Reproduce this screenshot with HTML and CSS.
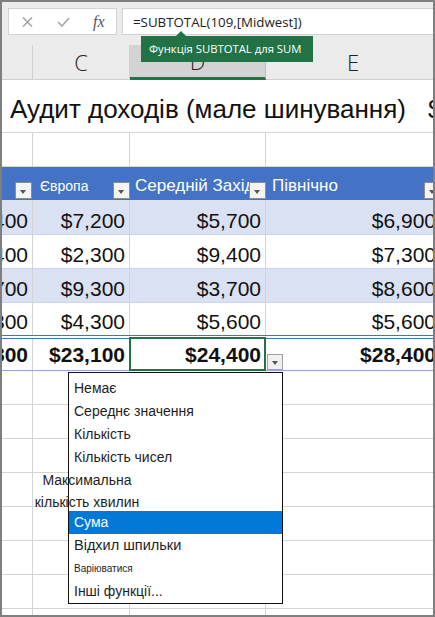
FILE: index.html
```html
<!DOCTYPE html>
<html lang="uk">
<head>
    <meta charset="UTF-8">
    <meta name="viewport" content="width=device-width, initial-scale=1.0">
    <title>Аудит доходів</title>
    <link rel="stylesheet" href="styles.css">
</head>
<body>
    <div class="window">
        <div class="formula-bar">
            <div class="fx-tools">
                <svg class="tool" width="11" height="10" viewBox="0 0 11 10">
                    <path d="M1 0.5 L10 9.5 M10 0.5 L1 9.5" />
                </svg>
                <svg class="tool" width="13" height="10" viewBox="0 0 13 10">
                    <path d="M1 5 L5 9 L12 1" />
                </svg>
                <i class="fx">fx</i>
            </div>
            <div class="formula">
                <span class="formula-text">=SUBTOTAL(109,[Midwest])</span>
                <div class="tip">Функція SUBTOTAL для SUM</div>
            </div>
        </div>

        <div class="col-heads">
            <div class="col-head"></div>
            <div class="col-head">C</div>
            <div class="col-head active">D</div>
            <div class="col-head">E</div>
        </div>

        <div class="sheet">
            <div class="title-row">
                <span class="title">Аудит доходів (мале шинування)</span>
                <span class="title next">$</span>
            </div>

            <div class="row">
                <div class="cell"></div><div class="cell"></div><div class="cell"></div><div class="cell"></div>
            </div>

            <div class="row thead">
                <div class="th"><span class="filter"></span></div>
                <div class="th small">Європа<span class="filter"></span></div>
                <div class="th">Середній Захід<span class="filter"></span></div>
                <div class="th">Північно<span class="filter"></span></div>
            </div>

            <div class="row data band first">
                <div class="cell">$6,400</div><div class="cell">$7,200</div><div class="cell">$5,700</div><div class="cell">$6,900</div>
            </div>
            <div class="row data">
                <div class="cell">$8,400</div><div class="cell">$2,300</div><div class="cell">$9,400</div><div class="cell">$7,300</div>
            </div>
            <div class="row data band">
                <div class="cell">$5,700</div><div class="cell">$9,300</div><div class="cell">$3,700</div><div class="cell">$8,600</div>
            </div>
            <div class="row data last">
                <div class="cell">$2,300</div><div class="cell">$4,300</div><div class="cell">$5,600</div><div class="cell">$5,600</div>
            </div>

            <div class="row data total">
                <div class="cell">$22,800</div>
                <div class="cell">$23,100</div>
                <div class="cell selected">
                    $24,400
                    <span class="cell-drop"><span class="arrow"></span></span>
                    <ul class="menu">
                        <li>Немає</li>
                        <li>Середнє значення</li>
                        <li>Кількість</li>
                        <li>Кількість чисел</li>
                        <li class="odd">Максимальна кількість хвилин</li>
                        <li class="current">Сума</li>
                        <li class="big">Відхил шпильки</li>
                        <li class="tiny">Варіюватися</li>
                        <li>Інші функції...</li>
                    </ul>
                </div>
                <div class="cell">$28,400</div>
            </div>

            <div class="row"><div class="cell"></div><div class="cell"></div><div class="cell"></div><div class="cell"></div></div>
            <div class="row"><div class="cell"></div><div class="cell"></div><div class="cell"></div><div class="cell"></div></div>
            <div class="row"><div class="cell"></div><div class="cell"></div><div class="cell"></div><div class="cell"></div></div>
            <div class="row"><div class="cell"></div><div class="cell"></div><div class="cell"></div><div class="cell"></div></div>
            <div class="row"><div class="cell"></div><div class="cell"></div><div class="cell"></div><div class="cell"></div></div>
            <div class="row"><div class="cell"></div><div class="cell"></div><div class="cell"></div><div class="cell"></div></div>
            <div class="row"><div class="cell"></div><div class="cell"></div><div class="cell"></div><div class="cell"></div></div>
            <div class="row"><div class="cell"></div><div class="cell"></div><div class="cell"></div><div class="cell"></div></div>
        </div>
    </div>
</body>
</html>
```

FILE: styles.css
```css
body {
    margin: 0;
    padding: 0;
    background: #fff;
}

.window {
    width: 435px;
    height: 617px;
    box-sizing: border-box;
    border: 2px solid #7f7f7f;
    overflow: hidden;
    background: #fff;
}

/* formula bar */
.formula-bar {
    height: 43px;
    box-sizing: border-box;
    padding: 6px 0 0 6px;
    display: flex;
    gap: 5px;
    background: #ebebeb;
}

.fx-tools {
    width: 109px;
    height: 27px;
    box-sizing: border-box;
    border: 1px solid #d2d2d2;
    background: #fff;
    display: flex;
    align-items: center;
    padding-left: 13px;
    gap: 24px;
}

.tool {
    fill: none;
    stroke: #a6a6a6;
    stroke-width: 1.6;
}

.fx {
    font-family: "Liberation Serif", serif;
    font-size: 16px;
    color: #555;
    margin-left: -1px;
}

.formula {
    position: relative;
    flex: 1;
    height: 27px;
    box-sizing: border-box;
    border: 1px solid #d2d2d2;
    border-right: none;
    background: #fff;
    padding-left: 10px;
    display: flex;
    align-items: center;
}

.formula-text {
    font-family: "Open Sans", sans-serif;
    font-size: 13.3px;
    color: #222;
}

.tip {
    position: absolute;
    left: 18px;
    top: 27px;
    z-index: 2;
    width: 172px;
    height: 26px;
    box-sizing: border-box;
    padding-left: 8px;
    background: #217346;
    color: #fff;
    font-family: "Open Sans", sans-serif;
    font-size: 11.3px;
    line-height: 26px;
    white-space: nowrap;
}

.tip::before {
    content: "";
    position: absolute;
    left: 35px;
    top: -5px;
    border-left: 5px solid transparent;
    border-right: 5px solid transparent;
    border-bottom: 5px solid #217346;
}

/* column letters */
.col-heads {
    display: grid;
    grid-template-columns: 31px 97px 136px 175px;
    height: 35px;
    background: #ebebeb;
}

.col-head {
    border-right: 1px solid #d0d0d0;
    border-bottom: 1px solid #d0d0d0;
    display: flex;
    align-items: center;
    justify-content: center;
    font-family: "Open Sans", sans-serif;
    font-weight: 300;
    font-size: 22px;
    color: #222;
}

.col-head.active {
    background: #d3d3d3;
    border-bottom: 3px solid #217346;
    border-right-color: #bdbdbd;
}

/* grid */
.sheet {
    font-family: "Liberation Sans", Arial, sans-serif;
}

.title-row {
    height: 53px;
    box-sizing: border-box;
    border-bottom: 1px solid #d4d4d4;
    display: flex;
    align-items: flex-end;
    padding: 0 0 10px 8px;
    white-space: nowrap;
}

.title {
    font-size: 26px;
    line-height: 26px;
    color: #111;
}

.title.next {
    margin-left: 22px;
}

.row {
    display: grid;
    grid-template-columns: 31px 97px 136px 175px;
    height: 34px;
    box-sizing: border-box;
    border-bottom: 1px solid #d4d4d4;
}

.cell {
    border-right: 1px solid #d4d4d4;
    display: flex;
    align-items: flex-end;
    justify-content: flex-end;
    padding: 0 4px 3px 0;
    font-size: 21px;
    line-height: 21px;
    color: #111;
    white-space: nowrap;
    overflow: hidden;
}

/* table header */
.thead {
    height: 33px;
    background: #4472c4;
    border-bottom: none;
}

.th {
    position: relative;
    display: flex;
    align-items: flex-end;
    padding: 0 0 6px 5px;
    color: #fff;
    font-size: 17px;
    line-height: 17px;
    white-space: nowrap;
    overflow: hidden;
}

.th.small {
    font-size: 14px;
    line-height: 14px;
    padding-left: 7px;
    padding-bottom: 7px;
}

.th:last-child {
    padding-left: 6px;
}

.filter {
    position: absolute;
    right: 0;
    bottom: 1px;
    width: 17px;
    height: 17px;
    box-sizing: border-box;
    border: 1px solid #8c8c8c;
    background: #f4f4f4;
}

.th:first-child .filter {
    right: 1px;
}

.filter::after,
.arrow {
    content: "";
    position: absolute;
    left: 4px;
    top: 7px;
    border-left: 3.5px solid transparent;
    border-right: 3.5px solid transparent;
    border-top: 4px solid #555;
}

/* body rows */
.data {
    height: 34px;
    border-bottom: 1px solid #c9d6ee;
}

.data.first {
    height: 35px;
}

.band {
    background: #d9e1f2;
}

.data.last {
    height: 32px;
    border-bottom: none;
}

.total {
    height: 36px;
    border-top: 4px double #4472c4;
    border-bottom: 1px solid #8ea9db;
}

.total .cell {
    font-weight: bold;
    padding-bottom: 5px;
}

.cell.selected {
    position: relative;
    overflow: visible;
}

.cell.selected::before {
    content: "";
    position: absolute;
    left: -1px;
    top: -2px;
    right: -1px;
    bottom: -1px;
    border: 2px solid #217346;
}

.cell-drop {
    position: absolute;
    left: 137px;
    bottom: 0;
    width: 16px;
    height: 16px;
    box-sizing: border-box;
    border: 1px solid #a0a0a0;
    background: #f0f0f0;
}

.cell-drop .arrow {
    left: 4px;
    top: 6px;
}

/* subtotal function list */
.menu {
    position: absolute;
    left: -62px;
    top: 33px;
    z-index: 3;
    width: 215px;
    height: 232px;
    box-sizing: border-box;
    margin: 0;
    padding: 4px 0 0;
    list-style: none;
    border: 1px solid #111;
    background: #fff;
    font-family: "Liberation Sans", Arial, sans-serif;
    font-weight: normal;
    font-size: 14px;
    color: #1e1e1e;
    text-align: left;
}

.menu li {
    height: 23px;
    line-height: 23px;
    padding-left: 5px;
    white-space: nowrap;
}

.menu li.odd {
    height: 42px;
    line-height: 22px;
    width: 114px;
    margin-left: -39px;
    padding-left: 0;
    white-space: normal;
    text-align: center;
}

.menu li.current {
    background: #0078d7;
    color: #fff;
}

.menu li.big {
    font-size: 14.5px;
}

.menu li.tiny {
    font-size: 10px;
}
```
